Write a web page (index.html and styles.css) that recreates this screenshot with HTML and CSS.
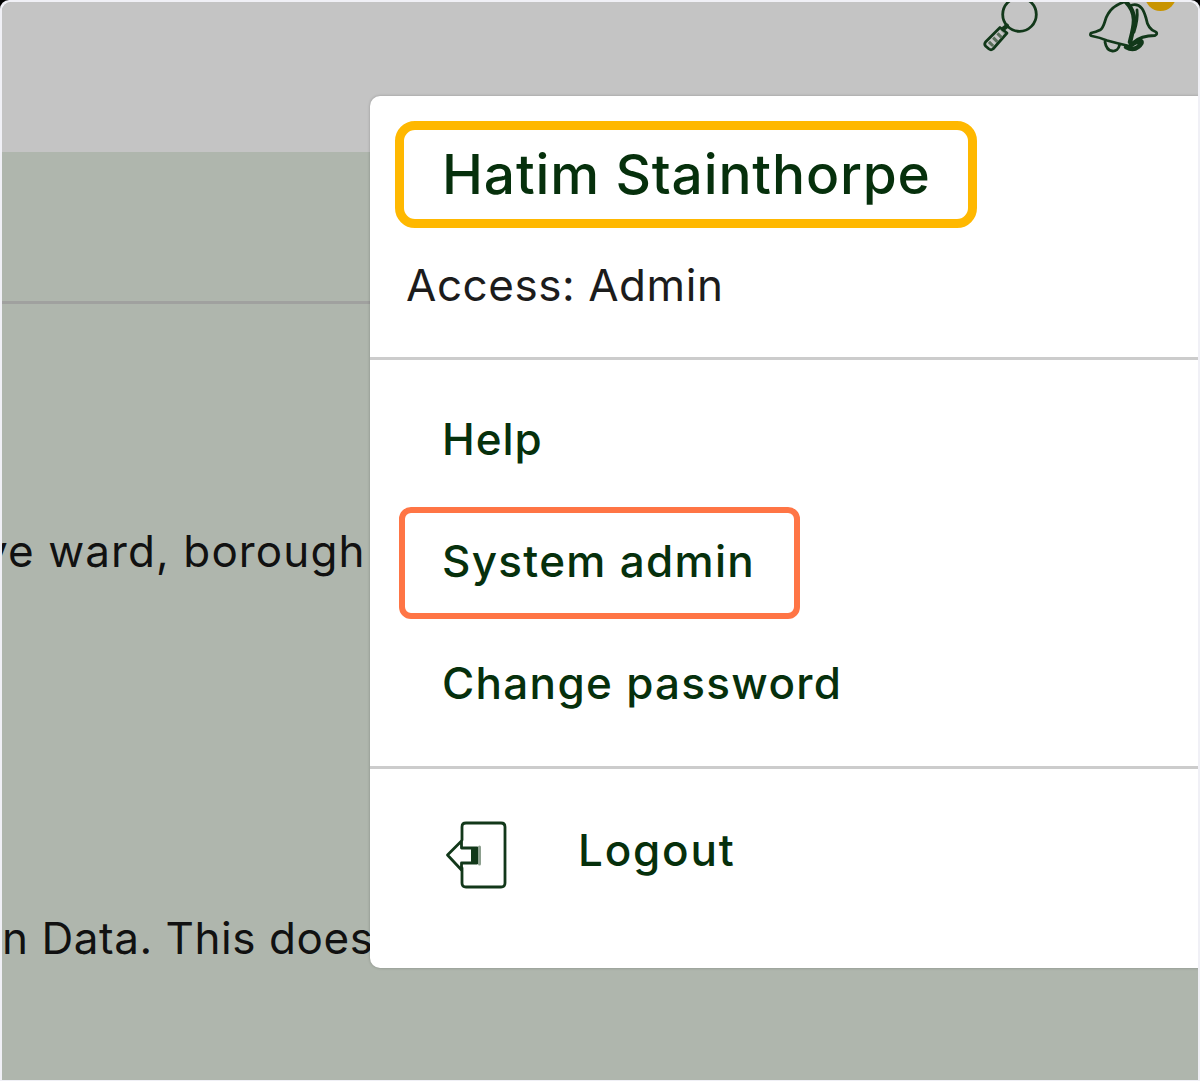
FILE: index.html
```html
<!DOCTYPE html>
<html lang="en">
<head>
<meta charset="utf-8">
<title>Account menu</title>
<link rel="stylesheet" href="styles.css">
</head>
<body>
<div class="frame">
  <div class="window">
    <header class="topbar">
      <svg class="icon-search" width="60" height="56" viewBox="0 0 60 56">
        <circle cx="39.5" cy="12.5" r="16.800"/>
        <path d="M27 24l-4 3" class="thick"/>
        <path d="M20 25.500l7 5.500-14 16q-2 1.500-4 0l-3.500-3q-1.500-2 0-4z"/>
        <path class="grip" d="M10 43l13-13"/>
      </svg>
      <svg class="icon-bell" width="72" height="56" viewBox="0 0 72 56">
        <path d="M36 0C30 2 24 5 20 12C16 18 17 25 12 28Q8 30 3 31q-1.500 2.500 1 3q8 1.500 15 4.500q11 3 22 5.500"/>
        <path d="M17 40c2 12 13 11 14.500 3"/>
        <path class="thick" d="M38 0c12 12 8 24 4 40"/>
        <path d="M44 3c9-2 12 6 14 13c1 6 3 12 10 14q2 2-1 3.500q-14 0-22 7"/>
        <path class="thick" d="M38 45q7 4 12 0t3-6q-6 1-10 4"/>
        <path d="M49 8c1 8-1 16-3 22"/>
      </svg>
      <span class="badge"></span>
    </header>
    <main class="content">
      <div class="subbar"></div>
      <p class="line line-ward">ve ward, borough</p>
      <p class="line line-data">n Data. This does</p>
    </main>
    <nav class="menu">
      <section class="profile">
        <div class="name"><span>Hatim Stainthorpe</span></div>
        <div class="access">Access: Admin</div>
      </section>
      <section class="links">
        <a class="item help">Help</a>
        <a class="item selected">System admin</a>
        <a class="item change">Change password</a>
      </section>
      <section class="logout">
        <svg width="64" height="72" viewBox="0 0 64 72">
          <path d="M17 22V9q0-4 4-4h35q4 0 4 4v56q0 4-4 4H21q-4 0-4-4V50" />
          <path d="M2.500 37L16.500 23v7H32v15H16.500v7z"/>
          <path class="thick" d="M29 32v11"/>
          <path class="tail" d="M34.500 29v17"/>
        </svg>
        <span>Logout</span>
      </section>
    </nav>
  </div>
</div>
</body>
</html>
```
FILE: styles.css
```css
* { box-sizing: border-box; }
body {
  margin: 0;
  background: #000;
  font-family: Inter, "Liberation Sans", sans-serif;
  font-size: 44px;
  color: #111;
}
.frame {
  height: 1081px;
  padding: 2px 2px 1px;
  background: #f0f0f6;
  border-radius: 9px 9px 0 0;
}
.window {
  position: relative;
  height: 1078px;
  overflow: hidden;
  border-radius: 9px 9px 0 0;
  background: #afb6ad;
}
.topbar {
  position: relative;
  display: flex;
  height: 150px;
  padding-left: 978px;
  gap: 48px;
  background: #c4c4c4;
}
.topbar svg, .logout svg {
  fill: none;
  stroke: #12381a;
  stroke-width: 2.8;
  stroke-linejoin: round;
  stroke-linecap: round;
}
.topbar .grip { stroke: #5a705b; stroke-width: 6; stroke-dasharray: 3 3; stroke-linecap: butt; }
.topbar .thick { stroke-width: 4.5; }
.badge {
  position: absolute;
  left: 1143px;
  top: -22px;
  width: 31px;
  height: 31px;
  border-radius: 50%;
  background: #c89400;
}
.subbar { height: 152px; border-bottom: 3px solid #a0a19f; }
.line {
  margin: 0;
  height: 60px;
  line-height: 60px;
  white-space: nowrap;
}
.line-ward { margin-top: 217px; margin-left: -19px; letter-spacing: 1.1px; }
.line-data { margin-top: 327px; letter-spacing: 0.55px; }
.menu {
  position: absolute;
  left: 368px;
  top: 94px;
  width: 840px;
  height: 872px;
  border-radius: 10px;
  background: #fff;
  box-shadow: 0 0 3px rgba(0, 0, 0, .25);
  color: #06300c;
  font-weight: 500;
}
.profile { height: 264px; padding: 25px 0 0 25px; border-bottom: 3px solid #ccc; }
.name {
  width: 582px;
  height: 107px;
  padding-left: 38px;
  border: 9px solid #ffb800;
  border-radius: 20px;
  font-size: 55px;
  line-height: 89px;
  letter-spacing: 0.85px;
  white-space: nowrap;
}
.access {
  padding-left: 11px;
  margin-top: 27px;
  line-height: 60px;
  font-weight: 400;
  letter-spacing: 0.55px;
  color: #1c1c1c;
}
.links {
  display: flex;
  flex-direction: column;
  gap: 10px;
  height: 409px;
  padding: 25px 0 0 29px;
  border-bottom: 3px solid #ccc;
}
.item {
  width: 401px;
  height: 112px;
  border: 6px solid transparent;
  border-radius: 12px;
  padding-left: 37px;
  line-height: 97px;
  letter-spacing: 1.3px;
  white-space: nowrap;
}
.help { letter-spacing: 0.9px; }
.selected { border-color: #ff7545; }
.logout {
  display: flex;
  gap: 69px;
  padding: 49px 0 0 75px;
  line-height: 65px;
  letter-spacing: 1.8px;
}
.logout .thick { stroke-width: 6; }
.logout .tail { stroke: #8da08f; stroke-width: 3; }
```
